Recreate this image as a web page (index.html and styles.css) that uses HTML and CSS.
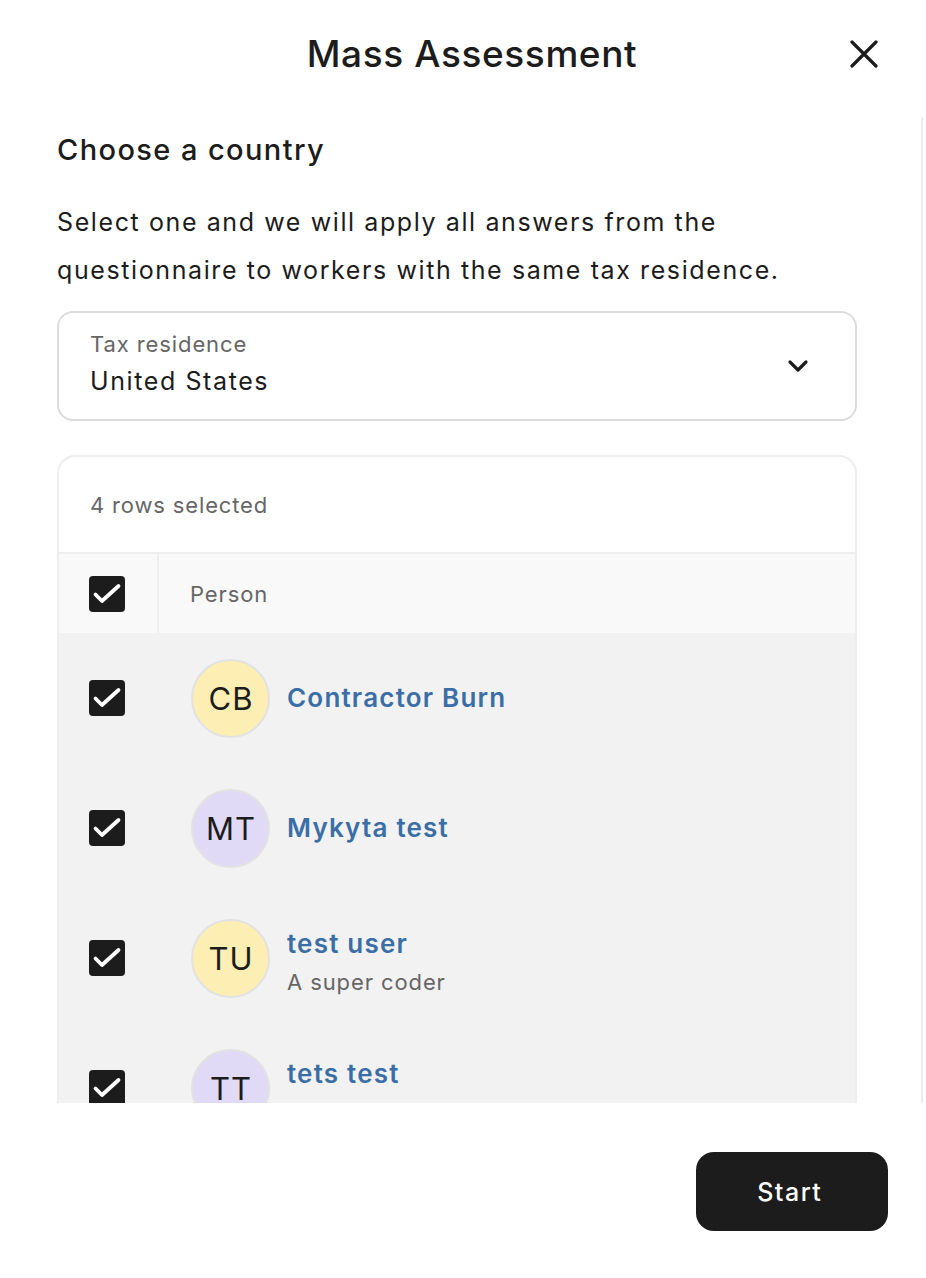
FILE: index.html
```html
<!DOCTYPE html>
<html>
<head>
<meta charset="utf-8">
<link rel="stylesheet" href="styles.css">
</head>
<body>
<div class="modal">
  <header class="modal-header">
    <h1 class="modal-title">Mass Assessment</h1>
    <button class="close-btn" aria-label="Close">
      <svg width="28" height="28" viewBox="0 0 28 28"><path d="M2 2 L26 26 M26 2 L2 26" stroke="#1c1c1c" stroke-width="3.2" stroke-linecap="round" fill="none"/></svg>
    </button>
  </header>
  <div class="modal-body">
    <div class="scroll-content">
      <h2 class="section-title">Choose a country</h2>
      <p class="section-text">Select one and we will apply all answers from the questionnaire to workers with the same tax residence.</p>
      <div class="select">
        <div class="select-values">
          <span class="select-label">Tax residence</span>
          <span class="select-value">United States</span>
        </div>
        <svg class="chevron" width="22" height="14" viewBox="0 0 22 14"><path d="M3 3 L11 11 L19 3" stroke="#1c1c1c" stroke-width="3.2" stroke-linecap="round" stroke-linejoin="round" fill="none"/></svg>
      </div>
      <div class="table-card">
        <div class="table-caption">4 rows selected</div>
        <div class="table-head">
          <div class="cell-check head-check"><span class="checkbox"><svg viewBox="0 0 36 36" width="36" height="36"><path d="M6.5 18.5 L13 25 L29.5 10" stroke="#fff" stroke-width="3.8" stroke-linecap="round" stroke-linejoin="round" fill="none"/></svg></span></div>
          <div class="cell-person head-person">Person</div>
        </div>
        <div class="table-row">
          <div class="cell-check"><span class="checkbox"><svg viewBox="0 0 36 36" width="36" height="36"><path d="M6.5 18.5 L13 25 L29.5 10" stroke="#fff" stroke-width="3.8" stroke-linecap="round" stroke-linejoin="round" fill="none"/></svg></span></div>
          <div class="cell-person">
            <span class="avatar avatar-yellow">CB</span>
            <div class="person-text"><span class="person-name">Contractor Burn</span></div>
          </div>
        </div>
        <div class="table-row">
          <div class="cell-check"><span class="checkbox"><svg viewBox="0 0 36 36" width="36" height="36"><path d="M6.5 18.5 L13 25 L29.5 10" stroke="#fff" stroke-width="3.8" stroke-linecap="round" stroke-linejoin="round" fill="none"/></svg></span></div>
          <div class="cell-person">
            <span class="avatar avatar-purple">MT</span>
            <div class="person-text"><span class="person-name">Mykyta test</span></div>
          </div>
        </div>
        <div class="table-row">
          <div class="cell-check"><span class="checkbox"><svg viewBox="0 0 36 36" width="36" height="36"><path d="M6.5 18.5 L13 25 L29.5 10" stroke="#fff" stroke-width="3.8" stroke-linecap="round" stroke-linejoin="round" fill="none"/></svg></span></div>
          <div class="cell-person">
            <span class="avatar avatar-yellow">TU</span>
            <div class="person-text with-sub"><span class="person-name">test user</span><span class="person-sub">A super coder</span></div>
          </div>
        </div>
        <div class="table-row">
          <div class="cell-check"><span class="checkbox"><svg viewBox="0 0 36 36" width="36" height="36"><path d="M6.5 18.5 L13 25 L29.5 10" stroke="#fff" stroke-width="3.8" stroke-linecap="round" stroke-linejoin="round" fill="none"/></svg></span></div>
          <div class="cell-person">
            <span class="avatar avatar-purple">TT</span>
            <div class="person-text with-sub"><span class="person-name">tets test</span><span class="person-sub">A web developer</span></div>
          </div>
        </div>
      </div>
    </div>
  </div>
  <footer class="modal-footer">
    <button class="start-btn">Start</button>
  </footer>
</div>
</body>
</html>
```

FILE: styles.css
```css
* { box-sizing: border-box; }
html, body { margin: 0; padding: 0; background: #fff; }
body {
  font-family: Inter, "Noto Sans", "Liberation Sans", sans-serif;
  color: #1c1c1c;
}
.modal {
  width: 926px;
  height: 1278px;
  display: flex;
  flex-direction: column;
  overflow: hidden;
}
.modal-header {
  height: 117px;
  flex: none;
  display: flex;
  align-items: flex-start;
  padding: 32px 48px 0 94px;
}
.modal-title {
  flex: 1;
  margin: 0;
  text-align: center;
  font-size: 37px;
  line-height: 44px;
  font-weight: 500;
  letter-spacing: 0.6px;
}
.close-btn {
  width: 28px;
  height: 28px;
  margin-top: 8px;
  padding: 0;
  border: 0;
  background: none;
  display: flex;
}
.modal-body {
  height: 986px;
  flex: none;
  width: 923px;
  border-right: 2px solid #ececec;
  overflow: hidden;
}
.scroll-content {
  padding: 15px 0 0 57px;
  width: 857px;
  box-sizing: content-box;
}
.section-title {
  margin: 0;
  font-size: 29px;
  line-height: 36px;
  font-weight: 500;
  letter-spacing: 1.4px;
}
.section-text {
  margin: 30px 0 0;
  font-size: 25px;
  line-height: 48px;
  font-weight: 400;
  letter-spacing: 1.6px;
  width: 800px;
}
.select {
  margin-top: 17px;
  width: 800px;
  height: 110px;
  border: 2px solid #dcdcdc;
  border-radius: 16px;
  display: flex;
  align-items: center;
  padding: 17px 46px 23px 31px;
}
.select-values {
  flex: 1;
  display: flex;
  flex-direction: column;
  gap: 6px;
  align-self: flex-start;
}
.select-label {
  font-size: 22px;
  line-height: 29px;
  color: #666;
  letter-spacing: 0.9px;
}
.select-value {
  font-size: 25px;
  line-height: 32px;
  color: #1c1c1c;
  letter-spacing: 1.6px;
}
.chevron { margin-top: 6px; }
.table-card {
  margin-top: 34px;
  width: 800px;
  border: 2px solid #eeeeee;
  border-bottom: 0;
  border-radius: 18px 18px 0 0;
  overflow: hidden;
}
.table-caption {
  height: 95px;
  display: flex;
  align-items: center;
  padding-left: 31px;
  font-size: 22px;
  color: #666;
  letter-spacing: 0.85px;
}
.table-head {
  display: flex;
  height: 81px;
  border-top: 2px solid #eeeeee;
  background: #f9f9f9;
}
.cell-check {
  width: 100px;
  flex: none;
  display: flex;
  align-items: center;
  padding-left: 30px;
}
.head-check { border-right: 2px solid #eeeeee; }
.cell-person {
  flex: 1;
  display: flex;
  align-items: center;
  padding-left: 32px;
}
.head-person {
  font-size: 22px;
  color: #666;
  padding-left: 31px;
  letter-spacing: 0.9px;
}
.checkbox {
  width: 36px;
  height: 36px;
  border-radius: 4px;
  background: #1c1c1c;
  display: block;
}
.checkbox svg { display: block; }
.table-row {
  display: flex;
  height: 130px;
  background: #f2f2f2;
}
.avatar {
  width: 79px;
  height: 79px;
  flex: none;
  border-radius: 50%;
  border: 2px solid #e2e2e2;
  display: flex;
  align-items: center;
  justify-content: center;
  font-size: 31px;
  font-weight: 400;
  color: #1c1c1c;
  letter-spacing: 1px;
  padding-left: 1px;
}
.avatar-yellow { background: #fdeeb3; }
.avatar-purple { background: #e0daf6; }
.person-text {
  display: flex;
  flex-direction: column;
  margin-left: 17px;
}
.person-text.with-sub {
  margin-top: 8px;
  gap: 7px;
}
.person-name {
  font-size: 26px;
  line-height: 32px;
  font-weight: 600;
  color: #3a6ea6;
  letter-spacing: 1.2px;
}
.person-sub {
  font-size: 22px;
  line-height: 30px;
  color: #666;
  letter-spacing: 0.9px;
}
.modal-footer {
  flex: 1;
  display: flex;
  justify-content: flex-end;
  align-items: flex-start;
  padding: 49px 38px 0 0;
}
.start-btn {
  width: 192px;
  height: 79px;
  border: 0;
  border-radius: 18px;
  background: #1c1c1c;
  color: #fff;
  font-family: inherit;
  font-size: 25px;
  font-weight: 500;
  letter-spacing: 1.5px;
  padding-left: 1.5px;
}
```
